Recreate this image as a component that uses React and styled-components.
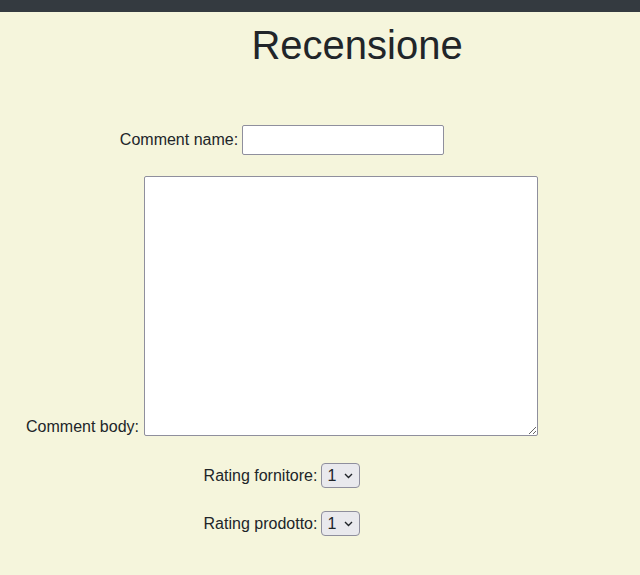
import styled, { createGlobalStyle } from "styled-components";

const GlobalStyle = createGlobalStyle`
  body {
    margin: 0;
    background: #f5f5dc;
    font-family: "Liberation Sans", Arial, sans-serif;
    color: #212529;
  }
`;

const TopBar = styled.div`
  height: 12px;
  background: #343a40;
`;

const Page = styled.div`
  min-height: 563px;
  background: #f5f5dc;
`;

const Title = styled.h1`
  margin: 9px 0 0;
  padding-left: 74px;
  font-size: 40px;
  font-weight: normal;
  line-height: 1.2;
  text-align: center;
`;

const Form = styled.form`
  width: 564px;
  display: flex;
  flex-direction: column;
`;

const Row = styled.div`
  display: flex;
  justify-content: center;
  align-items: ${(p) => (p.$bottom ? "flex-end" : "center")};
  gap: ${(p) => (p.$bottom ? 5 : 4)}px;
  margin-top: ${(p) => p.$top}px;
`;

const Label = styled.label`
  font-size: 16px;
  line-height: normal;
`;

const TextInput = styled.input`
  box-sizing: border-box;
  width: 202px;
  height: 30px;
  border: 1px solid #8f8f9d;
  border-radius: 2px;
  background: #fff;
  font: 16px "Liberation Sans", Arial, sans-serif;
`;

const BodyArea = styled.textarea`
  box-sizing: border-box;
  width: 394px;
  height: 260px;
  border: 1px solid #8f8f9d;
  border-radius: 2px;
  background: #fff;
  font: 16px "Liberation Sans", Arial, sans-serif;
`;

const SelectWrap = styled.div`
  position: relative;
  width: 39px;
  height: 25px;
`;

const Select = styled.select`
  appearance: none;
  box-sizing: border-box;
  width: 39px;
  height: 25px;
  margin: 0;
  padding: 0 0 0 5px;
  border: 1px solid #8f8f9d;
  border-radius: 4px;
  background: #e9e9ed;
  font: 16px "Liberation Sans", Arial, sans-serif;
  color: #212529;
`;

const Chevron = styled.svg`
  position: absolute;
  right: 7px;
  top: 10px;
  width: 9px;
  height: 6px;
  pointer-events: none;
`;

const RatingRow = ({ label, top }) => (
  <Row $top={top}>
    <Label>{label}</Label>
    <SelectWrap>
      <Select defaultValue="1">
        {[1, 2, 3, 4, 5].map((n) => (
          <option key={n} value={n}>
            {n}
          </option>
        ))}
      </Select>
      <Chevron viewBox="0 0 9 6">
        <path d="M1 1l3.5 3.5L8 1" fill="none" stroke="#212529" strokeWidth="1.4" />
      </Chevron>
    </SelectWrap>
  </Row>
);

const App = () => {
  return (
    <>
      <GlobalStyle />
      <TopBar />
      <Page>
        <Title>Recensione</Title>
        <Form>
          <Row $top={56}>
            <Label>Comment name:</Label>
            <TextInput type="text" />
          </Row>
          <Row $top={21} $bottom>
            <Label>Comment body:</Label>
            <BodyArea />
          </Row>
          <RatingRow label="Rating fornitore:" top={27} />
          <RatingRow label="Rating prodotto:" top={23} />
        </Form>
      </Page>
    </>
  );
};

export default App;
